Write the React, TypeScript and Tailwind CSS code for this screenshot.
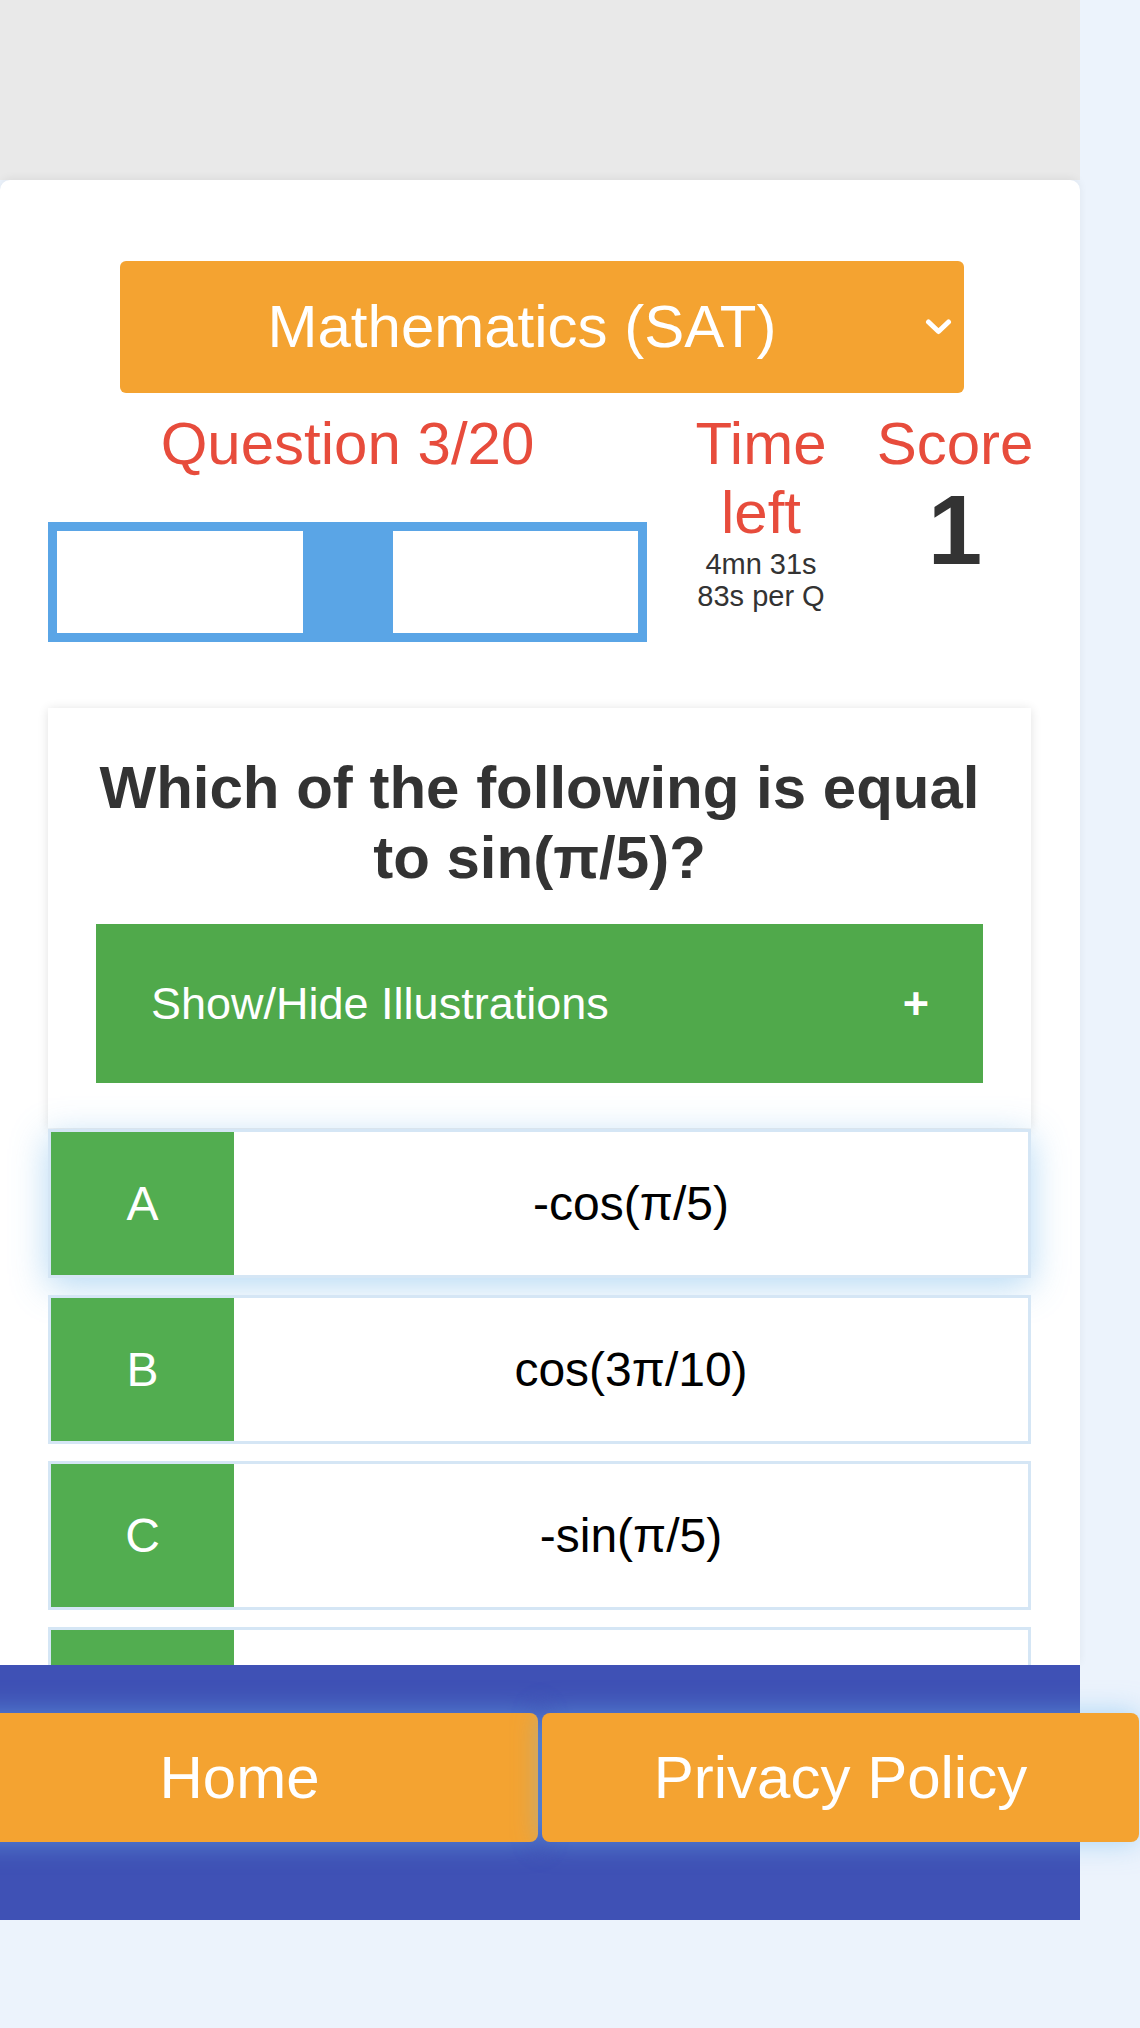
import React from "react";

const options = [
  { letter: "A", text: "-cos(π/5)", active: true },
  { letter: "B", text: "cos(3π/10)", active: false },
  { letter: "C", text: "-sin(π/5)", active: false },
  { letter: "D", text: "", active: false }, // hidden behind the footer
];

export default function App() {
  return (
    <div className="min-h-[2028px] bg-[#ecf3fc] font-['Liberation_Sans',Arial,sans-serif]">
      <div className="w-[1080px]">
        {/* top grey strip */}
        <div className="h-[180px] bg-[#e9e9e9]" />

        {/* quiz card */}
        <main className="h-[1485px] overflow-hidden rounded-t-[10px] bg-white shadow-[0_-2px_8px_rgba(0,0,0,0.06)]">
          {/* subject select */}
          <div className="relative ml-[120px] mt-[81px] flex h-[132px] w-[844px] items-center justify-center rounded-[6px] bg-[#f4a331] pr-[40px] text-[60px] text-white">
            Mathematics (SAT)
            <svg
              className="absolute right-[12px] top-1/2 -translate-y-1/2"
              width="27"
              height="17"
              viewBox="0 0 27 17"
            >
              <polyline
                points="3.5,3.5 13.5,13 23.5,3.5"
                fill="none"
                stroke="white"
                strokeWidth="5"
                strokeLinecap="round"
                strokeLinejoin="round"
              />
            </svg>
          </div>

          {/* stats row */}
          <div className="mt-[16px] flex">
            <div className="ml-[48px] flex w-[599px] flex-col items-center">
              <div className="text-[60px] leading-[69px] text-[#e74c3c]">Question 3/20</div>
              <div className="mt-[44px] flex h-[120px] w-[599px] border-[9px] border-[#5aa5e6]">
                <div className="w-[246px] bg-white" />
                <div className="w-[90px] bg-[#5aa5e6]" />
                <div className="flex-1 bg-white" />
              </div>
            </div>

            <div className="ml-[24px] flex w-[180px] flex-col items-center text-center">
              <div className="text-[60px] leading-[69px] text-[#e74c3c]">Time left</div>
              <div className="mt-[1px] text-[29px] leading-[32px] text-[#333]">
                4mn 31s
                <br />
                83s per Q
              </div>
            </div>

            <div className="ml-[24px] flex w-[160px] flex-col items-center">
              <div className="text-[60px] leading-[69px] text-[#e74c3c]">Score</div>
              <div className="text-[98px] font-bold leading-[104px] text-[#333]">1</div>
            </div>
          </div>

          {/* question */}
          <div className="ml-[48px] mt-[66px] w-[983px] bg-white px-[48px] pb-[45px] pt-[45px] shadow-[0_1px_10px_rgba(0,0,0,0.12)]">
            <h1 className="text-center text-[60px] font-bold leading-[70px] text-[#333]">
              Which of the following is equal to sin(π/5)?
            </h1>
            <button className="mt-[31px] flex h-[159px] w-full items-center justify-between bg-[#50a94b] pl-[55px] pr-[54px] text-[45px] text-white">
              <span>Show/Hide Illustrations</span>
              <span className="font-bold">+</span>
            </button>
          </div>

          {/* answers */}
          <div className="ml-[48px] mt-[1px] flex w-[983px] flex-col gap-[17px]">
            {options.map((o) => (
              <div
                key={o.letter}
                className={`flex h-[149px] shrink-0 border-[3px] border-[#d5e6f5] bg-white ${
                  o.active ? "shadow-[0_8px_34px_rgba(90,170,230,0.45)]" : ""
                }`}
              >
                <div className="flex w-[183px] items-center justify-center bg-[#52ad50] text-[48px] text-white">
                  {o.text ? o.letter : ""}
                </div>
                <div className="flex flex-1 items-center justify-center text-[48px] text-black">
                  {o.text}
                </div>
              </div>
            ))}
          </div>
        </main>

        {/* footer nav */}
        <footer className="flex h-[255px] justify-center gap-[4px] bg-[#3f51b5] pt-[48px]">
          <a className="flex h-[129px] w-[597px] shrink-0 items-center justify-center rounded-[8px] bg-[#f4a331] text-[60px] text-white shadow-[0_0_28px_rgba(110,185,240,0.55)]">
            Home
          </a>
          <a className="flex h-[129px] w-[597px] shrink-0 items-center justify-center rounded-[8px] bg-[#f4a331] text-[60px] text-white shadow-[0_0_28px_rgba(110,185,240,0.55)]">
            Privacy Policy
          </a>
        </footer>
      </div>
    </div>
  );
}
